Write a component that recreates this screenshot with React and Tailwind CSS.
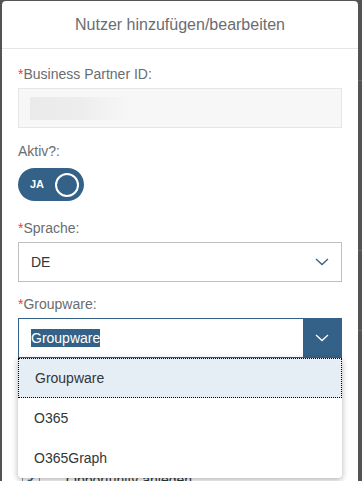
import React from 'react';

const font = { fontFamily: '"Liberation Sans", Arial, sans-serif' };

function Label({ required, children, className = '' }) {
  return (
    <div className={`h-5 flex items-center text-[14px] text-[#6a6d70] ${className}`}>
      {required && <span className="text-[#e34352]">*</span>}
      {children}
    </div>
  );
}

function Chevron({ color }) {
  return (
    <svg width="14" height="8" viewBox="0 0 14 8" fill="none">
      <path d="M1 1l6 5.5L13 1" stroke={color} strokeWidth="1.3" />
    </svg>
  );
}

const options = ['Groupware', 'O365', 'O365Graph'];

export default function App() {
  return (
    <div className="w-[362px] h-[481px] overflow-hidden bg-[#545454] relative" style={font}>
      {/* faint background lines on the right */}
      <div className="absolute right-0 top-[80px] w-[4px] h-px bg-[#6b6b6b]" />
      <div className="absolute right-0 top-[250px] w-[4px] h-px bg-[#6b6b6b]" />
      <div className="absolute right-0 top-[330px] w-[4px] h-px bg-[#6b6b6b]" />

      {/* Dialog */}
      <div className="absolute left-[2px] top-px w-[356px] h-[600px] bg-white rounded-t-[4px]">
        <div className="h-[48px] border-b border-[#e5e5e5] flex items-center justify-center text-[16px] text-[#6a6d70]">
          Nutzer hinzufügen/bearbeiten
        </div>

        <div className="px-4">
          <Label required className="mt-[15px]">Business Partner ID:</Label>
          <div className="mt-[4px] h-[40px] border border-[#e5e5e5] bg-[#f7f7f7] flex items-center px-[11px]">
            <div className="w-[100px] h-[23px] bg-gradient-to-r from-[#eaeaea] via-[#ededed] to-[#f7f7f7]" />
          </div>

          <Label className="mt-[13px]">Aktiv?:</Label>
          <div className="mt-[7px] w-[66px] h-[33px] rounded-full bg-[#346187] flex items-center pl-[12px] pr-[5px] justify-between">
            <span className="text-[11px] font-bold text-white">JA</span>
            <span className="w-[24px] h-[24px] rounded-full border-2 border-white" />
          </div>

          <Label required className="mt-[17px]">Sprache:</Label>
          <div className="mt-[4px] h-[40px] border border-[#bfbfbf] flex items-center justify-between pl-[12px] pr-[12px]">
            <span className="text-[14px] text-[#32363a]">DE</span>
            <Chevron color="#346187" />
          </div>

          <Label required className="mt-[12px]">Groupware:</Label>
          <div className="mt-[4px] h-[40px] border border-[#346187] flex items-stretch">
            <div className="flex-1 flex items-center pl-[12px]">
              <span className="text-[14px] leading-[18px] bg-[#346187] text-white">Groupware</span>
            </div>
            <div className="w-[38px] bg-[#346187] flex items-center justify-center">
              <Chevron color="#ffffff" />
            </div>
          </div>

          <div className="mt-[112px] flex items-center h-5 gap-[26px] pl-[4px]">
            <span className="w-[18px] h-[18px] border border-[#89919a] flex items-center justify-center text-[#346187] text-[13px] font-bold">✓</span>
            <span className="text-[14px] text-[#32363a]">Opportunity anlegen</span>
          </div>
        </div>
      </div>

      {/* Dropdown list */}
      <div className="absolute left-[18px] top-[358px] w-[324px] bg-white rounded-b-[4px] shadow-[0_2px_6px_rgba(0,0,0,0.3)]">
        {options.map((o, i) => (
          <div
            key={o}
            className={`h-[40px] flex items-center pl-[16px] text-[14px] text-[#32363a] ${
              i === 0 ? 'bg-[#e5edf5] border border-dotted border-black pl-[15px]' : ''
            }`}
          >
            {o}
          </div>
        ))}
      </div>
    </div>
  );
}
